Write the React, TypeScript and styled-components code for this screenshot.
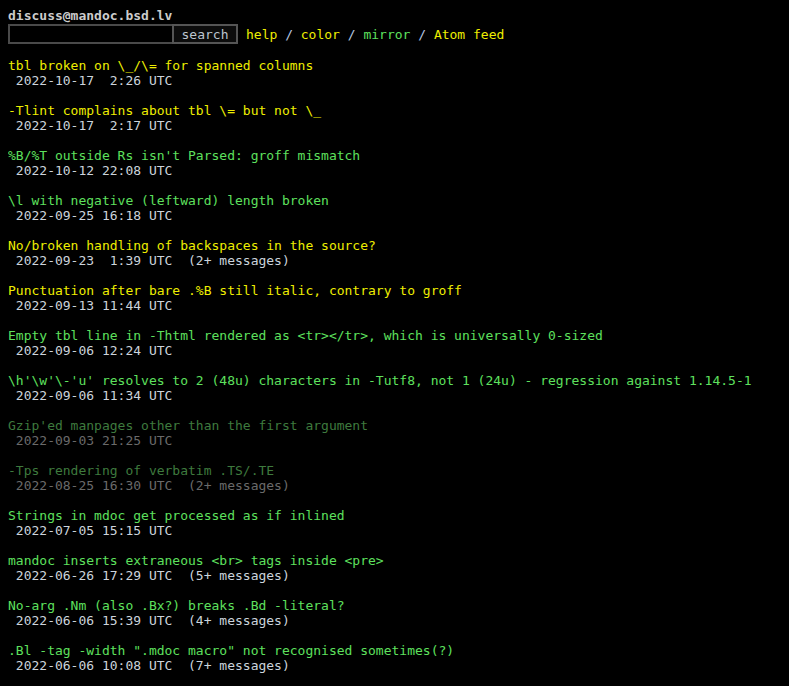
import React from "react";
import styled, { createGlobalStyle } from "styled-components";

const GlobalStyle = createGlobalStyle`
  html, body {
    background: #000;
  }
  body {
    margin: 8px;
    color: #ccc;
    font-family: "DejaVu Sans Mono", "Liberation Mono", monospace;
    font-size: 13px;
    line-height: 15px;
  }
`;

const Page = styled.div`
  display: flex;
  flex-direction: column;
`;

const ListTitle = styled.a`
  font-weight: bold;
  color: #ccc;
  text-decoration: none;
  height: 15px;
`;

const SearchForm = styled.form`
  display: flex;
  align-items: center;
  height: 22px;
  margin: 0;
`;

const SearchInput = styled.input`
  box-sizing: border-box;
  width: 164px;
  height: 20px;
  margin: 0;
  background: #000;
  border: 2px solid #4a4a4a;
  border-right: none;
  color: #ccc;
  font: inherit;
`;

const SearchButton = styled.button`
  box-sizing: border-box;
  width: 66px;
  height: 20px;
  margin: 0;
  padding: 0;
  background: #0c0c0c;
  border: 2px solid #555;
  color: #bcc6d0;
  font: inherit;
  font-size: 13px;
`;

const Nav = styled.span`
  margin-left: 8px;
  white-space: pre;
  color: #b8c8e0;
`;

const Link = styled.a<{ $tone: "new" | "seen" | "old" }>`
  text-decoration: none;
  color: ${(p) =>
    p.$tone === "new" ? "#eeee00" : p.$tone === "seen" ? "#5ee05e" : "#3e7a3e"};
`;

const List = styled.ul`
  list-style: none;
  margin: 13px 0 0;
  padding: 0;
  display: flex;
  flex-direction: column;
  gap: 15px;
`;

const Entry = styled.li`
  display: flex;
  flex-direction: column;
  white-space: pre;
`;

const Meta = styled.span<{ $dim?: boolean }>`
  color: ${(p) => (p.$dim ? "#6a6a6a" : "#ccd4dc")};
`;

type Tone = "new" | "seen" | "old";

const threads: { subject: string; date: string; count?: number; tone: Tone }[] = [
  { subject: "tbl broken on \\_/\\= for spanned columns", date: "2022-10-17  2:26", tone: "new" },
  { subject: "-Tlint complains about tbl \\= but not \\_", date: "2022-10-17  2:17", tone: "new" },
  { subject: "%B/%T outside Rs isn't Parsed: groff mismatch", date: "2022-10-12 22:08", tone: "seen" },
  { subject: "\\l with negative (leftward) length broken", date: "2022-09-25 16:18", tone: "seen" },
  { subject: "No/broken handling of backspaces in the source?", date: "2022-09-23  1:39", count: 2, tone: "new" },
  { subject: "Punctuation after bare .%B still italic, contrary to groff", date: "2022-09-13 11:44", tone: "new" },
  { subject: "Empty tbl line in -Thtml rendered as <tr></tr>, which is universally 0-sized", date: "2022-09-06 12:24", tone: "seen" },
  { subject: "\\h'\\w'\\-'u' resolves to 2 (48u) characters in -Tutf8, not 1 (24u) - regression against 1.14.5-1", date: "2022-09-06 11:34", tone: "seen" },
  { subject: "Gzip'ed manpages other than the first argument", date: "2022-09-03 21:25", tone: "old" },
  { subject: "-Tps rendering of verbatim .TS/.TE", date: "2022-08-25 16:30", count: 2, tone: "old" },
  { subject: "Strings in mdoc get processed as if inlined", date: "2022-07-05 15:15", tone: "seen" },
  { subject: "mandoc inserts extraneous <br> tags inside <pre>", date: "2022-06-26 17:29", count: 5, tone: "seen" },
  { subject: "No-arg .Nm (also .Bx?) breaks .Bd -literal?", date: "2022-06-06 15:39", count: 4, tone: "seen" },
  { subject: ".Bl -tag -width \".mdoc macro\" not recognised sometimes(?)", date: "2022-06-06 10:08", count: 7, tone: "seen" },
];

const App = () => (
  <Page>
    <GlobalStyle />
    <ListTitle href="#">discuss@mandoc.bsd.lv</ListTitle>
    <SearchForm onSubmit={(e) => e.preventDefault()}>
      <SearchInput type="text" name="q" />
      <SearchButton type="submit">search</SearchButton>
      <Nav>
        <Link $tone="new" href="#">help</Link> / <Link $tone="new" href="#">color</Link> /{" "}
        <Link $tone="seen" href="#">mirror</Link> / <Link $tone="new" href="#">Atom feed</Link>
      </Nav>
    </SearchForm>
    <List>
      {threads.map((t) => (
        <Entry key={t.subject}>
          <Link $tone={t.tone} href="#">{t.subject}</Link>
          <Meta $dim={t.tone === "old"}>
            {" " + t.date + " UTC" + (t.count ? `  (${t.count}+ messages)` : "")}
          </Meta>
        </Entry>
      ))}
    </List>
  </Page>
);

export default App;
